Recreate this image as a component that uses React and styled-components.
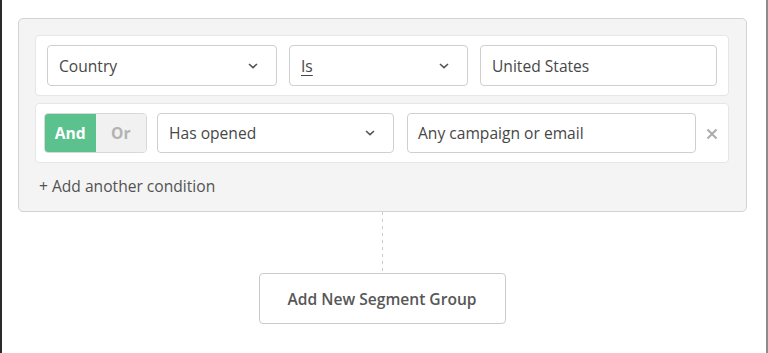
import React from 'react';
import styled, {createGlobalStyle} from 'styled-components';

const GlobalStyle = createGlobalStyle`
  html, body {
    margin: 0;
    padding: 0;
    background: #ffffff;
  }
  body {
    font-family: "Open Sans", "Noto Sans", sans-serif;
    color: #4f4f4f;
  }
`;

const Frame = styled.div`
  box-sizing: border-box;
  width: 768px;
  height: 353px;
  border-left: 2px solid #2a2a2a;
  border-right: 2px solid #8c8c8c;
  padding: 18px 0 0 16px;
  overflow: hidden;
`;

const Column = styled.div`
  width: 729px;
  display: flex;
  flex-direction: column;
  align-items: center;
`;

const Panel = styled.div`
  box-sizing: border-box;
  width: 100%;
  background: #f4f4f4;
  border: 1px solid #d3d3d3;
  border-radius: 5px;
  padding: 16px 17px 15px 16px;
  display: flex;
  flex-direction: column;
  gap: 7px;
`;

const Row = styled.div`
  box-sizing: border-box;
  display: flex;
  align-items: center;
  background: #ffffff;
  border: 1px solid #e6e6e6;
  border-radius: 4px;
  height: ${p => p.$h}px;
  padding: ${p => p.$pad};
  gap: ${p => p.$gap}px;
`;

const Field = styled.div`
  box-sizing: border-box;
  display: flex;
  align-items: center;
  justify-content: space-between;
  width: ${p => p.$w}px;
  height: ${p => p.$h}px;
  margin-right: ${p => p.$mr || 0}px;
  padding: 0 18px 0 ${p => p.$pl || 11}px;
  background: #ffffff;
  border: 1px solid #cfcfcf;
  border-radius: 4px;
  font-size: 15.6px;
  color: #474747;
  flex: none;
`;

const Underlined = styled.span`
  text-decoration: underline;
  text-underline-offset: 3px;
`;

const Chevron = () => (
  <svg width="10" height="6" viewBox="0 0 10 6">
    <path d="M1 1l4 3.6L9 1" fill="none" stroke="#555" strokeWidth="1.6" />
  </svg>
);

const Toggle = styled.div`
  box-sizing: border-box;
  display: flex;
  width: 103px;
  height: 40px;
  margin-right: 10px;
  border: 1px solid #d8d8d8;
  border-radius: 4px;
  overflow: hidden;
  flex: none;
`;

const ToggleOption = styled.div`
  display: flex;
  align-items: center;
  justify-content: center;
  width: 51px;
  background: ${p => (p.$active ? '#5bc28d' : '#f1f1f1')};
  color: ${p => (p.$active ? '#ffffff' : '#b3b3b3')};
  font-size: 15.6px;
  font-weight: 700;
`;

const Remove = styled.button`
  display: flex;
  align-items: center;
  justify-content: center;
  width: 18px;
  height: 18px;
  margin: 2px 0 0 7px;
  padding: 0;
  background: none;
  border: 0;
`;

const AddCondition = styled.div`
  margin: 6px 0 0 4px;
  font-size: 15.6px;
  line-height: 20px;
  color: #525252;
`;

const Connector = styled.div`
  width: 1px;
  height: 61px;
  margin-right: 1px;
  background: repeating-linear-gradient(
    to bottom,
    #cccccc 0,
    #cccccc 3px,
    transparent 3px,
    transparent 7px
  );
`;

const GroupButton = styled.button`
  box-sizing: border-box;
  width: 247px;
  height: 51px;
  margin-right: 1px;
  background: #ffffff;
  border: 1px solid #cbcbcb;
  border-radius: 4px;
  font-family: "Open Sans", "Noto Sans", sans-serif;
  font-size: 15.6px;
  font-weight: 600;
  color: #575757;
`;

export default function App() {
  return (
    <>
      <GlobalStyle />
      <Frame>
        <Column>
          <Panel>
            <Row $h={61} $pad="0 11px" $gap={12}>
              <Field $w={230} $h={41}>
                <span>Country</span>
                <Chevron />
              </Field>
              <Field $w={179} $h={41}>
                <Underlined>Is</Underlined>
                <Chevron />
              </Field>
              <Field $w={237} $h={41}>
                <span>United States</span>
              </Field>
            </Row>
            <Row $h={60} $pad="0 8px" $gap={0}>
              <Toggle>
                <ToggleOption $active>And</ToggleOption>
                <ToggleOption>Or</ToggleOption>
              </Toggle>
              <Field $w={237} $h={40} $mr={13}>
                <span>Has opened</span>
                <Chevron />
              </Field>
              <Field $w={289} $h={40} $pl={10}>
                <span>Any campaign or email</span>
              </Field>
              <Remove aria-label="Remove condition">
                <svg width="12" height="12" viewBox="0 0 12 12">
                  <path d="M1.5 1.5l9 9M10.5 1.5l-9 9" stroke="#acacac" strokeWidth="2" />
                </svg>
              </Remove>
            </Row>
            <AddCondition>+ Add another condition</AddCondition>
          </Panel>
          <Connector />
          <GroupButton>Add New Segment Group</GroupButton>
        </Column>
      </Frame>
    </>
  );
}
